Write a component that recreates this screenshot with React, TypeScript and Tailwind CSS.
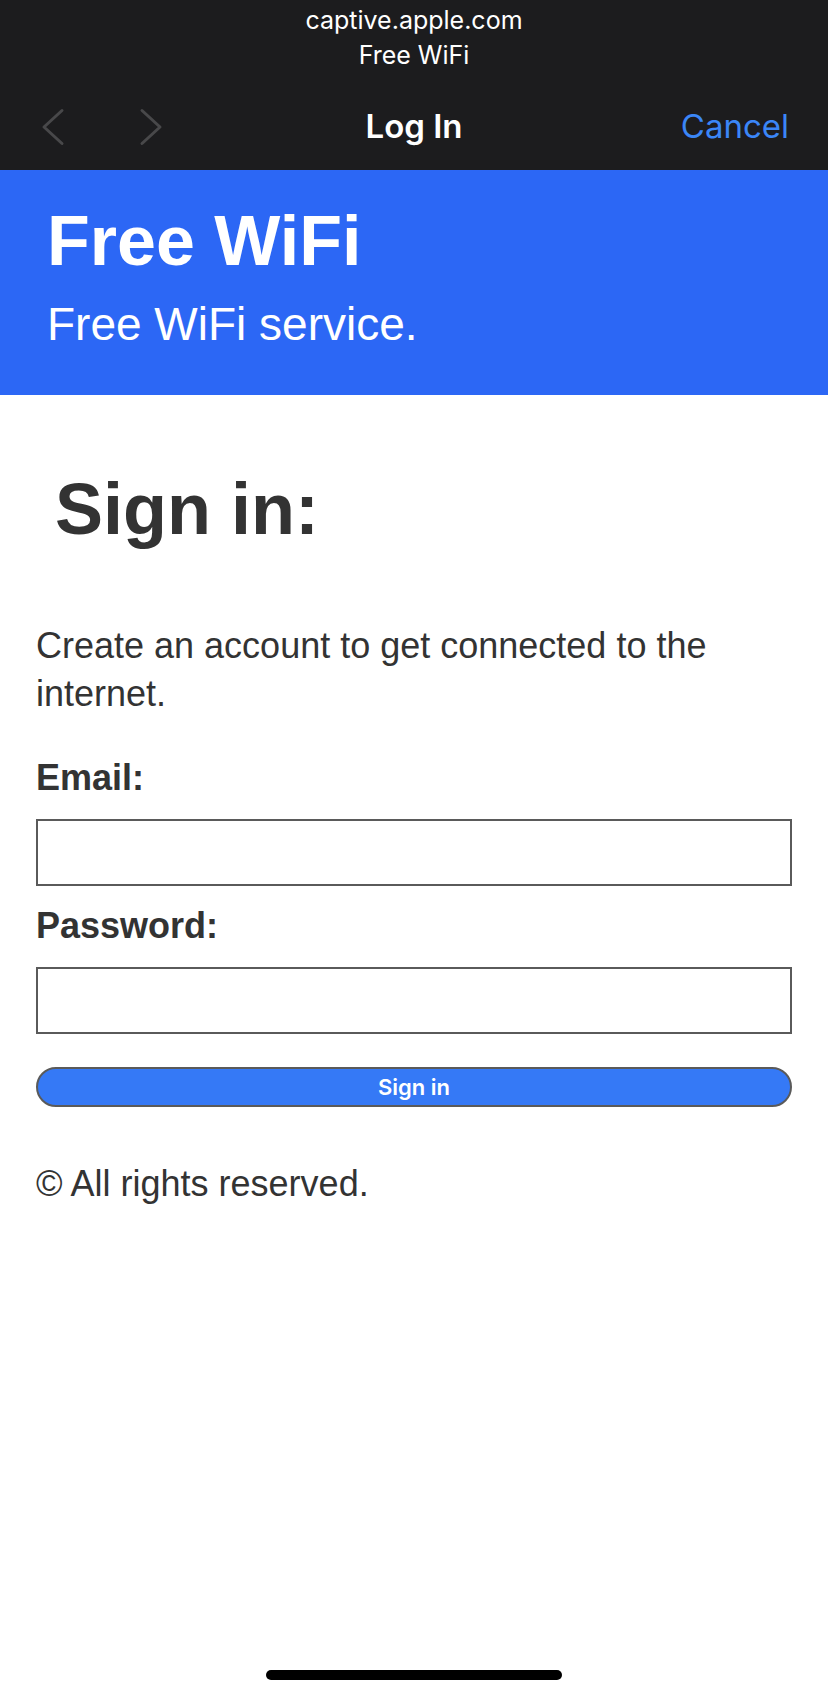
import React from "react";

function Chevron({ dir }: { dir: "left" | "right" }) {
  return (
    <svg width="24" height="38" viewBox="0 0 24 38" fill="none" className="block">
      <polyline
        points={dir === "left" ? "21,2.5 3,19 21,35.5" : "3,2.5 21,19 3,35.5"}
        stroke="#48484a"
        strokeWidth="3"
        strokeLinecap="round"
        strokeLinejoin="round"
      />
    </svg>
  );
}

export default function App() {
  const page = { fontFamily: '"Liberation Sans", Arial, Helvetica, sans-serif' };
  const sys = { fontFamily: 'Inter, "Noto Sans", sans-serif' };
  return (
    <div className="flex min-h-[1696px] w-[828px] flex-col bg-white" style={page}>
      {/* iOS captive sheet header */}
      <div className="bg-[#1c1c1e] text-white" style={sys}>
        <div className="pt-[3px] text-center text-[25px] leading-[35px]">
          <div>captive.apple.com</div>
          <div>Free WiFi</div>
        </div>
        <div className="mt-[10px] flex h-[87px] items-center">
          <div className="flex w-[220px] items-center pl-[41px]">
            <Chevron dir="left" />
            <div className="ml-[74px]">
              <Chevron dir="right" />
            </div>
          </div>
          <div className="flex-1 text-center text-[33px] font-semibold">Log In</div>
          <div className="w-[220px] pr-[39px] text-right text-[33px] text-[#3b86f7]">Cancel</div>
        </div>
      </div>

      {/* Blue banner */}
      <div className="bg-[#2c67f5] pl-[47px] pt-[36px] pb-[48px] text-white">
        <h1 className="text-[70px] font-bold leading-[70px]">Free WiFi</h1>
        <p className="mt-[25px] text-[46px] leading-[46px]">Free WiFi service.</p>
      </div>

      {/* Content */}
      <div className="px-[36px] text-[#333333]">
        <h2 className="mt-[78px] pl-[19px] text-[72px] font-bold leading-[72px]">Sign in:</h2>
        <p className="mt-[77px] text-[36px] leading-[48px]">
          Create an account to get connected to the internet.
        </p>
        <div className="mt-[36px] text-[36px] font-bold leading-[48px]">Email:</div>
        <div className="mt-[17px] h-[67px] w-full border-2 border-[#5a5a5a] bg-white" />
        <div className="mt-[16px] text-[36px] font-bold leading-[48px]">Password:</div>
        <div className="mt-[17px] h-[67px] w-full border-2 border-[#5a5a5a] bg-white" />
        <div
          className="mt-[33px] flex h-[40px] w-full items-center justify-center rounded-full border-2 border-[#5a5a5a] bg-[#3579f6] text-[22px] font-semibold text-white"
          style={sys}
        >
          Sign in
        </div>
        <p className="mt-[53px] text-[36px] leading-[48px]">© All rights reserved.</p>
      </div>

      <div className="flex-1" />
      <div className="mb-[16px] flex justify-center">
        <div className="h-[10px] w-[296px] rounded-full bg-black" />
      </div>
    </div>
  );
}
